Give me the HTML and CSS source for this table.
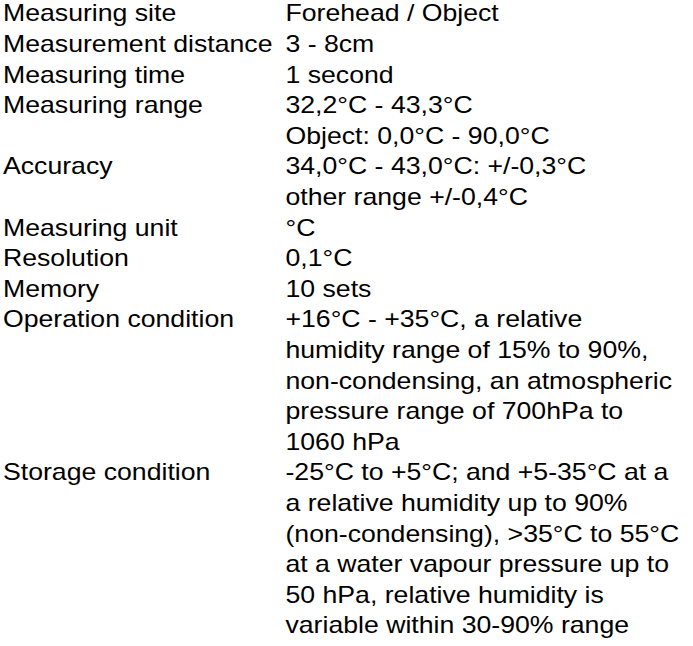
FILE: index.html
```html
<!DOCTYPE html>
<html lang="en">
<head>
<meta charset="utf-8">
<title>Specifications</title>
<link rel="stylesheet" href="styles.css">
</head>
<body>
<dl class="spec">
  <dt>Measuring site</dt><dd>Forehead / Object</dd>
  <dt>Measurement distance</dt><dd>3 - 8cm</dd>
  <dt>Measuring time</dt><dd>1 second</dd>
  <dt>Measuring range</dt><dd>32,2°C - 43,3°C<br>Object: 0,0°C - 90,0°C</dd>
  <dt>Accuracy</dt><dd>34,0°C - 43,0°C: +/-0,3°C<br>other range +/-0,4°C</dd>
  <dt>Measuring unit</dt><dd>°C</dd>
  <dt>Resolution</dt><dd>0,1°C</dd>
  <dt>Memory</dt><dd>10 sets</dd>
  <dt>Operation condition</dt><dd>+16°C - +35°C, a relative<br>humidity range of 15% to 90%,<br>non-condensing, an atmospheric<br>pressure range of 700hPa to<br>1060 hPa</dd>
  <dt>Storage condition</dt><dd>-25°C to +5°C; and +5-35°C at a<br>a relative humidity up to 90%<br>(non-condensing), &gt;35°C to 55°C<br>at a water vapour pressure up to<br>50 hPa, relative humidity is<br>variable within 30-90% range</dd>
</dl>
</body>
</html>
```
FILE: styles.css
```css
html, body {
  margin: 0;
  padding: 0;
  background: #ffffff;
}

.spec {
  display: grid;
  grid-template-columns: 254.5px max-content;
  width: max-content;
  margin: -1.6px 0 0 0;
  padding-left: 2.7px;
  font-family: "Liberation Sans", Arial, sans-serif;
  font-size: 24px;
  line-height: 30.6px;
  color: #000000;
  transform: scaleX(1.11);
  transform-origin: 0 0;
  white-space: nowrap;
}

.spec dt,
.spec dd {
  margin: 0;
  padding: 0;
}
```
